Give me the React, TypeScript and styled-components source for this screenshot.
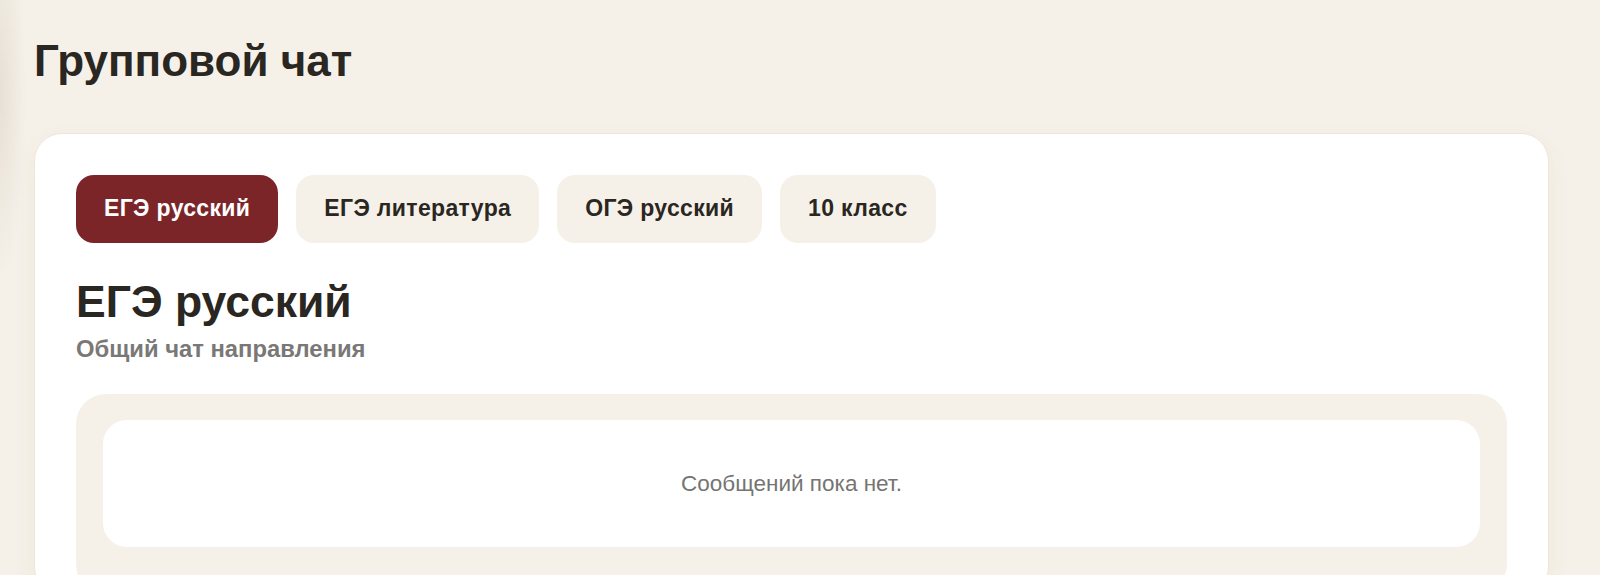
import React, { useState } from "react";
import styled, { createGlobalStyle } from "styled-components";

const GlobalStyle = createGlobalStyle`
  html, body {
    margin: 0;
    padding: 0;
    background: #f6f1e8;
    font-family: "Liberation Sans", Arial, Helvetica, sans-serif;
    color: #2a2622;
  }
  * { box-sizing: border-box; }
`;

const Page = styled.main`
  min-height: 575px;
  padding: 35px 51px 0 34px;
  background:
    radial-gradient(ellipse 26px 190px at 0 95px, rgba(110, 100, 85, 0.12), rgba(110, 100, 85, 0) 100%),
    #f6f1e8;
`;

const PageTitle = styled.h1`
  margin: 0 0 45px;
  font-size: 44px;
  line-height: 1.2;
  font-weight: 700;
  color: #2a2622;
`;

const Card = styled.section`
  background: #ffffff;
  border: 1px solid #ede6da;
  border-radius: 28px;
  padding: 41px 41px 0;
  min-height: 460px;
  box-shadow: 0 8px 24px rgba(90, 70, 40, 0.05);
`;

const Tabs = styled.div`
  display: flex;
  gap: 18px;
`;

const Tab = styled.button<{ $active: boolean }>`
  height: 68px;
  padding: 0 28px;
  border: none;
  border-radius: 18px;
  font-family: inherit;
  font-size: 23px;
  letter-spacing: 0.35px;
  font-weight: 700;
  cursor: pointer;
  background: ${(p) => (p.$active ? "#7b2529" : "#f6f1e8")};
  color: ${(p) => (p.$active ? "#ffffff" : "#2a2622")};
`;

const Heading = styled.h2`
  margin: 32px 0 3px;
  font-size: 44.5px;
  line-height: 54px;
  font-weight: 700;
  color: #2a2622;
`;

const Subtitle = styled.p`
  margin: 0 0 29px;
  font-size: 23.8px;
  line-height: 33.6px;
  font-weight: 700;
  color: #7a7876;
`;

const ChatArea = styled.div`
  background: #f6f1e8;
  border-radius: 30px;
  padding: 26px 27px;
  min-height: 200px;
`;

const Messages = styled.div`
  height: 127px;
  background: #ffffff;
  border-radius: 24px;
  display: flex;
  align-items: center;
  justify-content: center;
`;

const Empty = styled.span`
  font-size: 22.5px;
  color: #767472;
`;

const tabs = ["ЕГЭ русский", "ЕГЭ литература", "ОГЭ русский", "10 класс"];

export default function App() {
  const [active, setActive] = useState(0);
  return (
    <>
      <GlobalStyle />
      <Page>
        <PageTitle>Групповой чат</PageTitle>
        <Card>
          <Tabs>
            {tabs.map((t, i) => (
              <Tab key={t} $active={i === active} onClick={() => setActive(i)}>
                {t}
              </Tab>
            ))}
          </Tabs>
          <Heading>{tabs[active]}</Heading>
          <Subtitle>Общий чат направления</Subtitle>
          <ChatArea>
            <Messages>
              <Empty>Сообщений пока нет.</Empty>
            </Messages>
          </ChatArea>
        </Card>
      </Page>
    </>
  );
}
